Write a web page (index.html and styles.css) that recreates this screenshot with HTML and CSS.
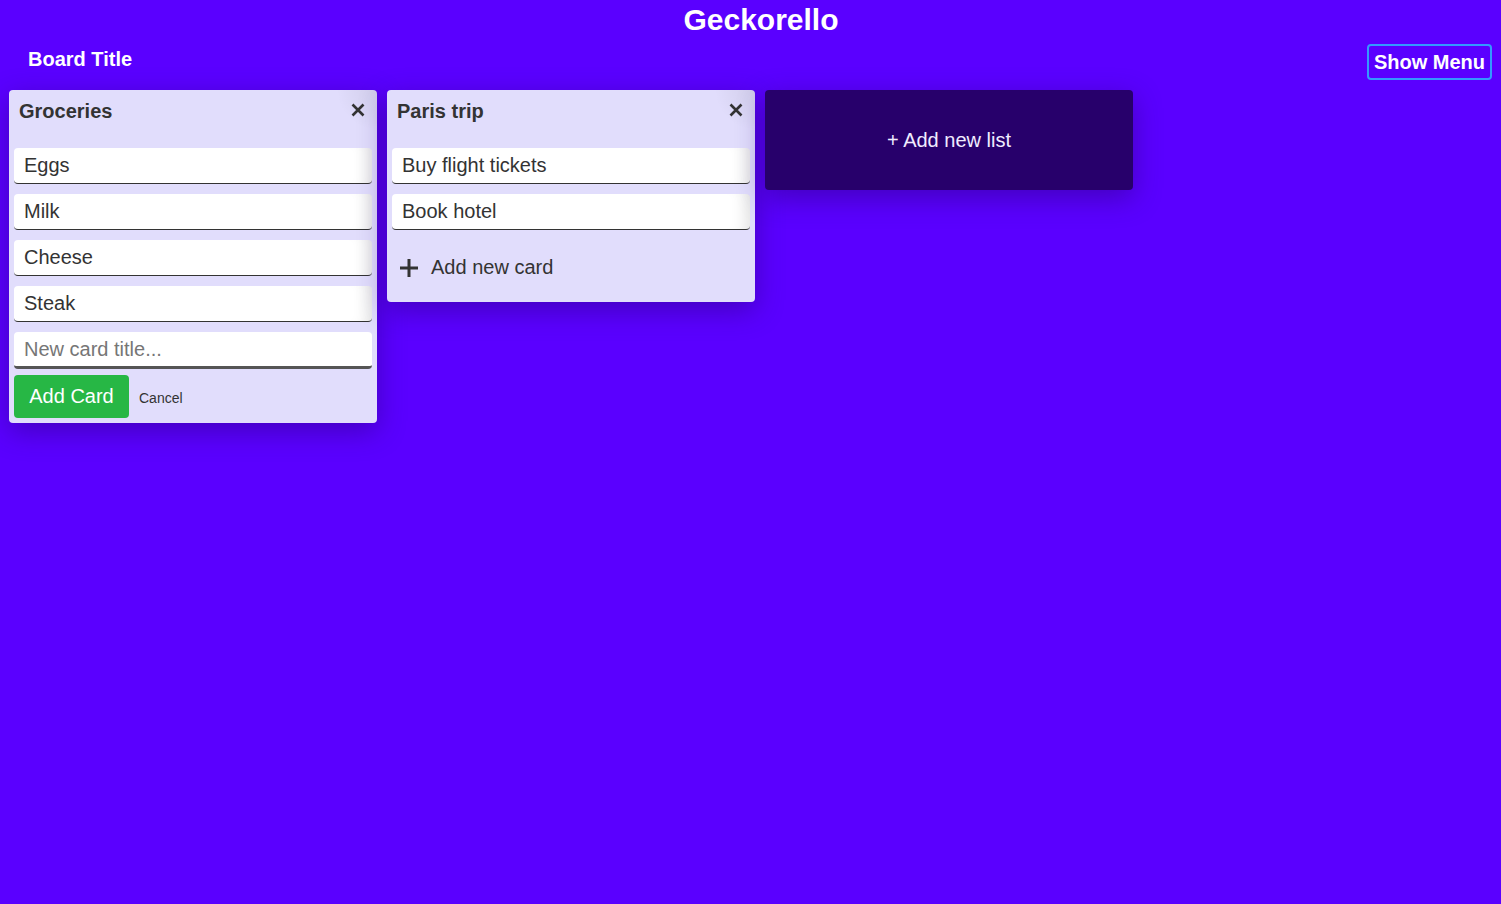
FILE: index.html
```html
<!DOCTYPE html>
<html lang="en">
<head>
<meta charset="utf-8">
<title>Geckorello</title>
<link rel="stylesheet" href="styles.css">
</head>
<body>
<header class="app-header">
  <h1 class="app-title">Geckorello</h1>
  <div class="board-bar">
    <h2 class="board-title">Board Title</h2>
    <button class="menu-btn">Show Menu</button>
  </div>
</header>
<main class="board">
  <section class="list">
    <div class="list-head">
      <h3 class="list-title">Groceries</h3>
      <span class="close"><svg width="14" height="14" viewBox="0 0 14 14"><path d="M1.5 1.5 L12.5 12.5 M12.5 1.5 L1.5 12.5" stroke="#333" stroke-width="2.6" stroke-linecap="butt"/></svg></span>
    </div>
    <div class="cards">
      <div class="card">Eggs</div>
      <div class="card">Milk</div>
      <div class="card">Cheese</div>
      <div class="card">Steak</div>
      <input class="new-card" type="text" placeholder="New card title...">
    </div>
    <div class="actions">
      <button class="add-btn">Add Card</button>
      <span class="cancel">Cancel</span>
    </div>
  </section>
  <section class="list">
    <div class="list-head">
      <h3 class="list-title">Paris trip</h3>
      <span class="close"><svg width="14" height="14" viewBox="0 0 14 14"><path d="M1.5 1.5 L12.5 12.5 M12.5 1.5 L1.5 12.5" stroke="#333" stroke-width="2.6" stroke-linecap="butt"/></svg></span>
    </div>
    <div class="cards">
      <div class="card">Buy flight tickets</div>
      <div class="card">Book hotel</div>
    </div>
    <div class="add-card">
      <svg width="20" height="20" viewBox="0 0 20 20"><path d="M10 1 V19 M1 10 H19" stroke="#333" stroke-width="3"/></svg>
      <span>Add new card</span>
    </div>
  </section>
  <section class="new-list">+ Add new list</section>
</main>
</body>
</html>
```
FILE: styles.css
```css
* { box-sizing: border-box; }
html, body { margin: 0; padding: 0; }
body {
  background: #5a00ff;
  font-family: "Liberation Sans", Arial, sans-serif;
  color: #333;
  min-height: 904px;
}
.app-header { color: #fff; }
.app-title {
  margin: 0;
  padding: 3px 0 0 21px;
  font-size: 30px;
  line-height: 34px;
  text-align: center;
  font-weight: bold;
}
.board-bar {
  display: flex;
  justify-content: space-between;
  align-items: flex-start;
  padding: 7px 9px 0 28px;
}
.board-title {
  margin: 4px 0 0;
  font-size: 20px;
  line-height: 23px;
  font-weight: bold;
}
.menu-btn {
  height: 36px;
  padding: 0 5px;
  border: 2px solid #3399ff;
  border-radius: 4px;
  background: transparent;
  color: #fff;
  font-family: inherit;
  font-size: 20px;
  font-weight: bold;
}
.board {
  display: flex;
  align-items: flex-start;
  gap: 10px;
  padding: 10px 0 0 9px;
}
.list {
  width: 368px;
  background: #e1ddfc radial-gradient(circle at 100% 0, rgba(0,0,0,0.07), rgba(0,0,0,0) 40px);
  border-radius: 4px;
  padding: 0 5px 5px;
  box-shadow: 0 8px 28px rgba(40, 0, 110, 0.45);
}
.list-head {
  display: flex;
  justify-content: space-between;
  align-items: flex-start;
  height: 58px;
  padding: 10px 7px 0 5px;
}
.list-title {
  margin: 0;
  font-size: 20px;
  line-height: 23px;
  font-weight: bold;
  color: #333;
}
.close { display: flex; padding-top: 3px; }
.cards { display: flex; flex-direction: column; gap: 10px; }
.card {
  height: 36px;
  padding: 6px 10px;
  background: #fff;
  border-radius: 4px;
  border-bottom: 1px solid #333;
  font-size: 20px;
  line-height: 23px;
  color: #333;
  box-shadow: inset -18px 0 16px -14px rgba(0,0,0,0.12);
}
.new-card {
  height: 37px;
  width: 100%;
  padding: 6px 10px;
  border: none;
  border-bottom: 3px solid #555;
  border-radius: 4px;
  background: #fff;
  font-family: inherit;
  font-size: 20px;
  line-height: 23px;
  color: #333;
  outline: none;
}
.new-card::placeholder { color: #767676; }
.actions {
  display: flex;
  align-items: center;
  gap: 10px;
  margin-top: 6px;
}
.add-btn {
  height: 43px;
  width: 115px;
  border: none;
  border-radius: 4px;
  background: #27b745;
  color: #fff;
  font-family: inherit;
  font-size: 20px;
  padding: 0;
}
.cancel { font-size: 14px; color: #333; padding-top: 2px; }
.add-card {
  display: flex;
  align-items: center;
  gap: 12px;
  height: 57px;
  margin-top: 10px;
  padding: 0 0 2px 7px;
  font-size: 20px;
  line-height: 23px;
  color: #333;
}
.add-card svg { flex: none; }
.new-list {
  width: 368px;
  height: 100px;
  display: flex;
  align-items: center;
  justify-content: center;
  background: #27006b;
  border-radius: 4px;
  color: #f0ecff;
  font-size: 20px;
  box-shadow: 0 8px 28px rgba(40, 0, 110, 0.45);
}
```
